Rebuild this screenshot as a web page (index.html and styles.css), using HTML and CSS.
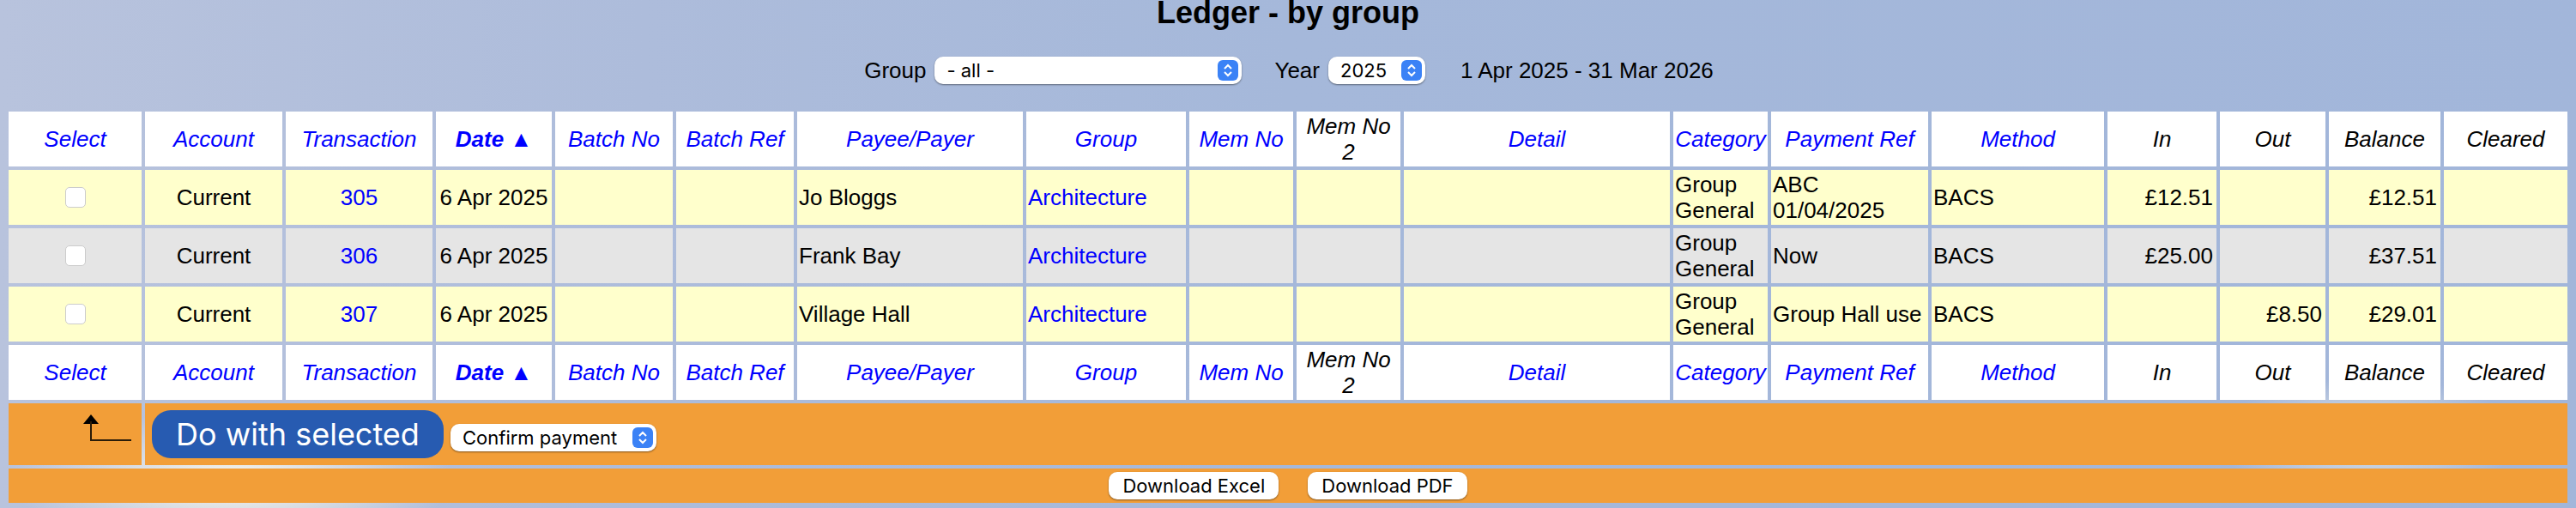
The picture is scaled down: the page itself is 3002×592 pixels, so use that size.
FILE: index.html
```html
<!DOCTYPE html>
<html lang="en">
<head>
  <meta charset="UTF-8" />
  <meta name="viewport" content="width=device-width, initial-scale=1.0" />
  <title>Ledger - by group</title>
  <link rel="stylesheet" href="styles.css">
</head>
<body>
  <h1>Ledger - by group</h1>
  <form class="filters">
    <label for="group-filter">Group</label>
    <span class="picker picker-group">
      <select id="group-filter"><option>- all -</option></select>
      <svg class="picker-arrow" viewBox="0 0 24 24"><path d="M8 10l4-4 4 4M8 14l4 4 4-4"/></svg>
    </span>
    <label class="year-label" for="year-filter">Year</label>
    <span class="picker picker-year">
      <select id="year-filter"><option>2025</option></select>
      <svg class="picker-arrow" viewBox="0 0 24 24"><path d="M8 10l4-4 4 4M8 14l4 4 4-4"/></svg>
    </span>
    <span class="date-range">1 Apr 2025 - 31 Mar 2026</span>
  </form>
  <table class="ledger">
    <colgroup>
      <col class="w155"><col class="w160"><col class="w171"><col class="w135"><col class="w137"><col class="w137">
      <col class="w263"><col class="w186"><col class="w121"><col class="w121"><col class="w310"><col class="w110">
      <col class="w183"><col class="w201"><col class="w127"><col class="w123"><col class="w130"><col class="w144">
    </colgroup>
    <thead>
      <tr>
        <th><a href="#">Select</a></th>
        <th><a href="#">Account</a></th>
        <th><a href="#">Transaction</a></th>
        <th><a class="sorted" href="#">Date ▲</a></th>
        <th><a href="#">Batch No</a></th>
        <th><a href="#">Batch Ref</a></th>
        <th><a href="#">Payee/Payer</a></th>
        <th><a href="#">Group</a></th>
        <th><a href="#">Mem No</a></th>
        <th>Mem No 2</th>
        <th><a href="#">Detail</a></th>
        <th><a href="#">Category</a></th>
        <th><a href="#">Payment Ref</a></th>
        <th><a href="#">Method</a></th>
        <th>In</th>
        <th>Out</th>
        <th>Balance</th>
        <th>Cleared</th>
      </tr>
    </thead>
    <tbody>
      <tr class="odd">
        <td class="center"><input type="checkbox"></td>
        <td class="center">Current</td>
        <td class="center"><a href="#">305</a></td>
        <td class="center">6 Apr 2025</td>
        <td></td>
        <td></td>
        <td>Jo Bloggs</td>
        <td><a href="#">Architecture</a></td>
        <td></td>
        <td></td>
        <td></td>
        <td>Group General</td>
        <td>ABC 01/04/2025</td>
        <td>BACS</td>
        <td class="money">£12.51</td>
        <td class="money"></td>
        <td class="money">£12.51</td>
        <td></td>
      </tr>
      <tr class="even">
        <td class="center"><input type="checkbox"></td>
        <td class="center">Current</td>
        <td class="center"><a href="#">306</a></td>
        <td class="center">6 Apr 2025</td>
        <td></td>
        <td></td>
        <td>Frank Bay</td>
        <td><a href="#">Architecture</a></td>
        <td></td>
        <td></td>
        <td></td>
        <td>Group General</td>
        <td>Now</td>
        <td>BACS</td>
        <td class="money">£25.00</td>
        <td class="money"></td>
        <td class="money">£37.51</td>
        <td></td>
      </tr>
      <tr class="odd">
        <td class="center"><input type="checkbox"></td>
        <td class="center">Current</td>
        <td class="center"><a href="#">307</a></td>
        <td class="center">6 Apr 2025</td>
        <td></td>
        <td></td>
        <td>Village Hall</td>
        <td><a href="#">Architecture</a></td>
        <td></td>
        <td></td>
        <td></td>
        <td>Group General</td>
        <td>Group Hall use</td>
        <td>BACS</td>
        <td class="money"></td>
        <td class="money">£8.50</td>
        <td class="money">£29.01</td>
        <td></td>
      </tr>
    </tbody>
    <tfoot>
      <tr>
        <th><a href="#">Select</a></th>
        <th><a href="#">Account</a></th>
        <th><a href="#">Transaction</a></th>
        <th><a class="sorted" href="#">Date ▲</a></th>
        <th><a href="#">Batch No</a></th>
        <th><a href="#">Batch Ref</a></th>
        <th><a href="#">Payee/Payer</a></th>
        <th><a href="#">Group</a></th>
        <th><a href="#">Mem No</a></th>
        <th>Mem No 2</th>
        <th><a href="#">Detail</a></th>
        <th><a href="#">Category</a></th>
        <th><a href="#">Payment Ref</a></th>
        <th><a href="#">Method</a></th>
        <th>In</th>
        <th>Out</th>
        <th>Balance</th>
        <th>Cleared</th>
      </tr>
      <tr class="actions">
        <td class="arrow-cell">
          <svg class="up-arrow" viewBox="0 0 60 32"><path class="up-head" d="M0 11L9 0l9 11z"/><path class="up-line" d="M9 8v22h47"/></svg>
        </td>
        <td colspan="17">
          <div class="action-row">
            <button class="do-selected" type="button">Do with selected</button>
            <span class="picker picker-action">
              <select><option>Confirm payment</option></select>
              <svg class="picker-arrow" viewBox="0 0 24 24"><path d="M8 10l4-4 4 4M8 14l4 4 4-4"/></svg>
            </span>
          </div>
        </td>
      </tr>
      <tr class="downloads">
        <td colspan="18">
          <div class="download-row">
            <button type="button">Download Excel</button>
            <button type="button">Download PDF</button>
          </div>
        </td>
      </tr>
    </tfoot>
  </table>
</body>
</html>
```

FILE: styles.css
```css
html, body {
  height: 100%;
}
body {
  margin: 0;
  padding: 0 6px;
  overflow: hidden;
  color: #000;
  font-family: "Liberation Sans", Arial, sans-serif;
  font-size: 26px;
  line-height: 30px;
  background-color: #a3b7d9;
  background-image:
    radial-gradient(ellipse 260px 80px at 270px 560px, rgba(255, 250, 235, 0.95), rgba(255, 250, 235, 0) 100%),
    radial-gradient(ellipse 180px 70px at 2760px 510px, rgba(255, 250, 235, 0.7), rgba(255, 250, 235, 0) 100%),
    linear-gradient(90deg, #b8c3dd, #adbcdb 25%, #a5b8da 50%, #a2b6da);
}
a {
  color: #00f;
  text-decoration: none;
}
h1 {
  margin: 0;
  height: 36px;
  font-size: 36px;
  line-height: 30px;
  text-align: center;
}
.filters {
  display: flex;
  align-items: center;
  justify-content: center;
  height: 32px;
  margin-top: 30px;
  margin-bottom: 28px;
  padding-left: 2px;
}
.filters label {
  margin-right: 10px;
}
.filters .year-label {
  margin-left: 38px;
}
.date-range {
  margin-left: 41px;
}
.picker {
  position: relative;
  display: inline-block;
  height: 32px;
}
.picker select {
  appearance: none;
  -webkit-appearance: none;
  display: block;
  width: 100%;
  height: 32px;
  margin: 0;
  padding: 0 0 0 14px;
  border: none;
  border-radius: 10px;
  background: #fff;
  box-shadow: 0 1px 2px rgba(0, 0, 0, 0.45);
  color: #000;
  font-family: Inter, sans-serif;
  font-size: 22px;
}
.picker-group { width: 358px; }
.picker-year { width: 113px; }
.picker-action { width: 240px; }
.picker-arrow {
  position: absolute;
  top: 4px;
  right: 4px;
  width: 24px;
  height: 24px;
  border-radius: 6px;
  background: #3b82f6;
  fill: none;
  stroke: #fff;
  stroke-width: 2;
}
.ledger {
  table-layout: fixed;
  width: 2990px;
  border-collapse: separate;
  border-spacing: 4px;
}
.w155 { width: 155px; }
.w160 { width: 160px; }
.w171 { width: 171px; }
.w135 { width: 135px; }
.w137 { width: 137px; }
.w263 { width: 263px; }
.w186 { width: 186px; }
.w121 { width: 121px; }
.w310 { width: 310px; }
.w110 { width: 110px; }
.w183 { width: 183px; }
.w201 { width: 201px; }
.w127 { width: 127px; }
.w123 { width: 123px; }
.w130 { width: 130px; }
.w144 { width: 144px; }
.ledger th, .ledger td {
  height: 64px;
  padding: 0 2px;
  box-sizing: border-box;
}
.ledger th {
  background-color: #fff;
  font-style: italic;
  font-weight: normal;
  text-align: center;
}
.ledger th .sorted {
  font-weight: bold;
}
.odd td {
  background-color: #ffc;
}
.even td {
  background-color: #e5e5e5;
}
.ledger td.center {
  text-align: center;
}
.ledger td.money {
  padding-right: 4px;
  text-align: right;
}
.ledger input[type="checkbox"] {
  appearance: none;
  -webkit-appearance: none;
  display: block;
  width: 24px;
  height: 24px;
  margin: 0 auto;
  border: 1px solid #ccc;
  border-radius: 5px;
  background: #fff;
}
.ledger .actions td {
  height: 72px;
  padding: 0;
  background-color: #f29e38;
}
.ledger .downloads td {
  height: 40px;
  padding: 0;
  background-color: #f29e38;
}
.ledger .arrow-cell {
  text-align: left;
  vertical-align: top;
}
.up-arrow {
  display: block;
  width: 60px;
  height: 32px;
  margin: 13px 0 0 87px;
}
.up-head {
  fill: #000;
}
.up-line {
  fill: none;
  stroke: #2a1c08;
  stroke-width: 2;
}
.action-row {
  display: flex;
  align-items: center;
  gap: 8px;
  padding-left: 8px;
}
.picker-action {
  margin-top: 8px;
}
.do-selected {
  width: 340px;
  height: 56px;
  padding: 0;
  border: none;
  border-radius: 22px;
  background-color: #275bb1;
  color: #fff;
  font-family: Inter, sans-serif;
  font-size: 36px;
}
.download-row {
  display: flex;
  justify-content: center;
  gap: 34px;
}
.download-row button {
  height: 32px;
  padding: 0 16px;
  border: none;
  border-radius: 10px;
  background: #fff;
  box-shadow: 0 1px 2px rgba(0, 0, 0, 0.45);
  color: #000;
  font-family: Inter, sans-serif;
  font-size: 22px;
}
```
